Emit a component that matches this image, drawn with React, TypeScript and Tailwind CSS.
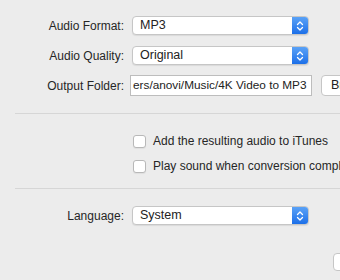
import React from 'react';

const font = { fontFamily: '"Liberation Sans", Arial, sans-serif' };

function Arrows() {
  return (
    <svg width="8" height="12" viewBox="0 0 8 12" fill="none" stroke="white" strokeWidth="1.3" strokeLinecap="round" strokeLinejoin="round">
      <path d="M1.5 4.5 L4 2 L6.5 4.5" />
      <path d="M1.5 7.5 L4 10 L6.5 7.5" />
    </svg>
  );
}

function Popup({ value }: { value: string }) {
  return (
    <div className="w-[177px] h-[19px] shrink-0 flex rounded-[4px] bg-white border border-[#c6c6c6] shadow-[0_1px_1px_rgba(0,0,0,0.08)] overflow-hidden">
      <div className="flex-1 pl-[7px] text-[12.5px] leading-[16px] text-[#222]">{value}</div>
      <div className="w-[16px] flex items-center justify-center bg-gradient-to-b from-[#5aa2f7] to-[#1b6fe8]">
        <Arrows />
      </div>
    </div>
  );
}

function Row({ label, children, className }: { label: string; children: React.ReactNode; className?: string }) {
  return (
    <div className={`flex items-center gap-2 ${className ?? ''}`}>
      <div className="w-[124px] shrink-0 text-right text-[12px] text-[#262626] whitespace-nowrap">{label}</div>
      {children}
    </div>
  );
}

function Check({ label, className }: { label: string; className?: string }) {
  return (
    <div className={`flex items-center pl-[133px] h-[18px] ${className ?? ''}`}>
      <div className="w-[13px] h-[13px] rounded-[3px] bg-white border border-[#b8b8b8] shadow-[0_1px_1px_rgba(0,0,0,0.06)] shrink-0" />
      <span className="ml-[7px] text-[12px] text-[#262626] whitespace-nowrap">{label}</span>
    </div>
  );
}

export default function App() {
  return (
    <div className="w-[340px] h-[280px] bg-[#ececec] overflow-hidden flex flex-col" style={font}>
      <Row label="Audio Format:" className="mt-[16px]">
        <Popup value="MP3" />
      </Row>
      <Row label="Audio Quality:" className="mt-[11px]">
        <Popup value="Original" />
      </Row>
      <Row label="Output Folder:" className="mt-[10px]">
        <div className="ml-[-2px] w-[182px] h-[21px] shrink-0 bg-white border border-[#bdbdbd] pl-[2px] text-[11.8px] leading-[19px] text-[#222] whitespace-nowrap overflow-hidden">
          ers/anovi/Music/4K Video to MP3
        </div>
        <div className="ml-[1px] w-[60px] h-[21px] shrink-0 rounded-[4px] bg-white border border-[#c6c6c6] pl-[9px] text-[12.5px] leading-[19px] text-[#222] whitespace-nowrap overflow-hidden">
          Browse...
        </div>
      </Row>

      <div className="mt-[17px] ml-[15px] h-px bg-[#d6d6d6]" />

      <Check label="Add the resulting audio to iTunes" className="mt-[18px]" />
      <Check label="Play sound when conversion complete" className="mt-[7px]" />

      <div className="mt-[13px] ml-[15px] h-px bg-[#d6d6d6]" />

      <Row label="Language:" className="mt-[17px]">
        <Popup value="System" />
      </Row>

      <div className="mt-[28px] ml-[333px] w-[60px] h-[18px] shrink-0 rounded-[4px] bg-white border border-[#c6c6c6]" />
    </div>
  );
}
